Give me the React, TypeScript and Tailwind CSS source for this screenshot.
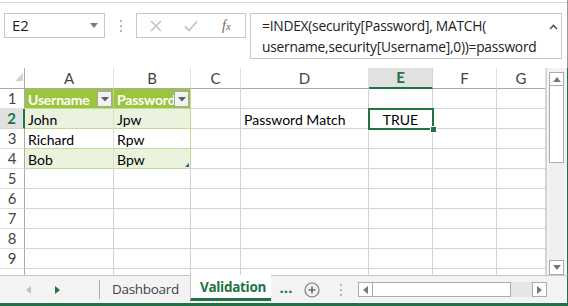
import React from "react";

function Tri({ dir, color, className }: { dir: "up" | "down" | "left" | "right"; color: string; className?: string }) {
  const pts: Record<string, string> = {
    up: "0,5 4,0 8,5",
    down: "0,0 8,0 4,5",
    left: "5,0 5,8 0,4",
    right: "0,0 0,8 5,4",
  };
  const w = dir === "up" || dir === "down" ? 8 : 5;
  const h = dir === "up" || dir === "down" ? 5 : 8;
  return (
    <svg width={w} height={h} viewBox={`0 0 ${w} ${h}`} className={className}>
      <polygon points={pts[dir]} fill={color} />
    </svg>
  );
}

function FilterBtn() {
  return (
    <div className="absolute right-[1px] top-[2px] w-[15px] h-[16px] border border-[#a6a6a6] bg-[#f2f2f2] flex items-center justify-center">
      <svg width="8" height="5" viewBox="0 0 8 5">
        <polygon points="0,0 8,0 4,4.5" fill="#5f5f5f" />
      </svg>
    </div>
  );
}

type CellDef = {
  text?: string;
  kind?: "th" | "td1" | "td2";
  align?: "left" | "center";
  selected?: boolean;
  filter?: boolean;
  colB?: boolean;
  handle?: boolean;
};

export default function App() {
  const cols = ["A", "B", "C", "D", "E", "F", "G"];
  const rows: Record<number, Record<string, CellDef>> = {
    1: { A: { text: "Username", kind: "th", filter: true }, B: { text: "Password", kind: "th", filter: true, colB: true } },
    2: {
      A: { text: "John", kind: "td1" },
      B: { text: "Jpw", kind: "td1", colB: true },
      D: { text: "Password Match" },
      E: { text: "TRUE", align: "center", selected: true },
    },
    3: { A: { text: "Richard", kind: "td2" }, B: { text: "Rpw", kind: "td2", colB: true } },
    4: { A: { text: "Bob", kind: "td1" }, B: { text: "Bpw", kind: "td1", colB: true, handle: true } },
  };

  const cellClass = (d: CellDef | undefined) => {
    const base = "relative flex items-center text-[14px] text-black border-b border-r whitespace-nowrap";
    if (!d || !d.kind) return `${base} border-[#d4d4d4]`;
    if (d.kind === "th") {
      return `${base} bg-[#9bc53d] text-white font-bold tracking-[-0.2px] border-b-[#c2dc96] ${d.colB ? "border-r-[#c2dc96]" : "border-r-[#b8d77e]"}`;
    }
    if (d.kind === "td1") {
      return `${base} bg-[#ebf3df] border-b-[#c2dc96] ${d.colB ? "border-r-[#c2dc96]" : "border-r-[#d9e3cc]"}`;
    }
    return `${base} bg-white border-b-[#c2dc96] ${d.colB ? "border-r-[#c2dc96]" : "border-r-[#d9e3cc]"}`;
  };

  return (
    <div className="w-[568px] h-[306px] bg-white overflow-hidden flex flex-col font-['Lato',sans-serif] text-black">
      {/* formula bar area */}
      <div className="h-[68px] shrink-0 flex flex-col border-r border-r-[#9a9a9a]">
        <div className="mt-[2px] h-px bg-[#d6d6d6]" />
        <div className="flex items-start pt-[10px] pl-[4px]">
          <div className="w-[101px] h-[25px] border border-[#c6c6c6] flex items-center justify-between pl-[7px] pr-[6px]">
            <span className="text-[15px] text-[#222] font-['Open_Sans',sans-serif]">E2</span>
            <Tri dir="down" color="#7a7a7a" />
          </div>
          <div className="w-[31px] h-[25px] flex flex-col items-center justify-center gap-[3px]">
            <div className="w-[2px] h-[2px] bg-[#b4b4b4]" />
            <div className="w-[2px] h-[2px] bg-[#b4b4b4]" />
            <div className="w-[2px] h-[2px] bg-[#b4b4b4]" />
          </div>
          <div className="w-[110px] h-[25px] border border-[#c6c6c6] flex items-center">
            <svg width="12" height="12" viewBox="0 0 12 12" className="ml-[13px]">
              <path d="M1 1 L11 11 M11 1 L1 11" stroke="#c4c4c4" strokeWidth="1.6" />
            </svg>
            <svg width="14" height="12" viewBox="0 0 14 12" className="ml-[22px]">
              <path d="M1 6.5 L5 10.5 L13 1.5" stroke="#c4c4c4" strokeWidth="1.8" fill="none" />
            </svg>
            <span className="ml-[24px] text-[14px] italic text-[#6a6a6a] font-['Liberation_Serif',serif] leading-none">
              f<span className="text-[11px]">x</span>
            </span>
          </div>
          <div className="ml-[4px] w-[312px] h-[46px] border border-[#c6c6c6] flex justify-between">
            <div className="pl-[11px] pt-[1px] text-[13.8px] leading-[21px] text-[#222] font-['Open_Sans',sans-serif] tracking-[-0.25px]">
              <div>=INDEX(security[Password], MATCH(</div>
              <div>username,security[Username],0))=password</div>
            </div>
            <svg width="9" height="6" viewBox="0 0 9 6" className="mt-[10px] mr-[3px]">
              <path d="M1 5 L4.5 1.5 L8 5" stroke="#555" strokeWidth="1.6" fill="none" />
            </svg>
          </div>
        </div>
      </div>

      {/* sheet area */}
      <div className="flex h-[207px] shrink-0 border-r border-r-[#217346]">
        <div className="grid grid-cols-[25px_89px_77px_50px_128px_64px_64px_49px] grid-rows-[21px_repeat(9,20px)_6px] w-[546px]">
          <div className="relative border-r border-b border-r-[#ababab] border-b-[#ababab] bg-white">
            <svg width="8" height="8" viewBox="0 0 8 8" className="absolute left-[15px] top-[5px]">
              <polygon points="8,0 8,8 0,8" fill="#d2d2d2" />
            </svg>
          </div>
          {cols.map((c) =>
            c === "E" ? (
              <div
                key={c}
                className="flex items-center justify-center border-b-2 border-b-[#217346] border-r border-r-[#d4d4d4] bg-[#e1e1e1] text-[15px] font-bold text-[#217346]"
              >
                {c}
              </div>
            ) : (
              <div
                key={c}
                className="flex items-center justify-center border-b border-b-[#ababab] border-r border-r-[#e1e1e1] bg-white text-[15px] text-[#444]"
              >
                {c}
              </div>
            )
          )}
          {[1, 2, 3, 4, 5, 6, 7, 8, 9].map((r) => (
            <React.Fragment key={r}>
              {r === 2 ? (
                <div className="flex items-center justify-center bg-[#e1e1e1] border-b border-b-[#d4d4d4] border-r-2 border-r-[#217346] text-[15px] font-bold text-[#217346]">
                  {r}
                </div>
              ) : (
                <div className="flex items-center justify-center bg-white border-b border-b-[#e1e1e1] border-r border-r-[#ababab] text-[15px] text-[#444]">
                  {r}
                </div>
              )}
              {cols.map((c) => {
                const d = rows[r]?.[c];
                return (
                  <div key={c} className={`${cellClass(d)} ${d?.selected ? "z-10" : ""}`}>
                    {d?.text && (
                      <span className={`${d.align === "center" ? "w-full text-center" : "pl-[3px]"} leading-none pt-[2px]`}>{d.text}</span>
                    )}
                    {d?.filter && <FilterBtn />}
                    {d?.selected && (
                      <div className="absolute -left-[1px] -top-[1px] w-[66px] h-[22px] border-2 border-[#217346]">
                        <div className="absolute -right-[5px] -bottom-[5px] w-[7px] h-[7px] bg-[#217346] border border-white" />
                      </div>
                    )}
                    {d?.handle && (
                      <svg width="4" height="4" viewBox="0 0 4 4" className="absolute right-[1px] bottom-[1px]">
                        <polygon points="4,0 4,4 0,4" fill="#3b4ea8" />
                      </svg>
                    )}
                  </div>
                );
              })}
            </React.Fragment>
          ))}
          <div className="border-r border-r-[#ababab]" />
          {cols.map((c) => (
            <div key={c} className="border-r border-r-[#d4d4d4]" />
          ))}
        </div>
        {/* vertical scrollbar panel */}
        <div className="flex-1 bg-[#f3f3f3] border-l border-l-[#d4d4d4] pl-[2px] pt-[4px]">
          <div className="w-[15px] h-[203px] flex flex-col">
            <div className="h-[14px] border border-[#ababab] bg-white flex items-center justify-center">
              <Tri dir="up" color="#777" />
            </div>
            <div className="h-[77px] border border-[#ababab] border-t-0 bg-white" />
            <div className="flex-1 bg-[#f0f0f0]" />
            <div className="h-[15px] border border-[#ababab] bg-white flex items-center justify-center">
              <Tri dir="down" color="#777" />
            </div>
          </div>
        </div>
      </div>

      {/* tab bar */}
      <div className="h-[28px] shrink-0 bg-[#f3f3f3] border-t border-t-[#c6c6c6] flex items-stretch border-r border-r-[#217346] relative">
        <div className="w-[100px] flex items-center border-r border-r-[#ababab] my-[4px]">
          <Tri dir="left" color="#c0c0c0" className="ml-[26px]" />
          <Tri dir="right" color="#217346" className="ml-[24px]" />
        </div>
        <div className="w-[90px] flex items-center pl-[12px] text-[13.5px] text-[#444] font-['Open_Sans',sans-serif] tracking-[-0.3px]">
          Dashboard
        </div>
        <div className="-mt-px w-[81px] bg-white border-l border-l-[#c6c6c6] flex items-center justify-center border-b-[3px] border-b-[#217346] mb-[2px]">
          <span className="text-[13.5px] font-bold text-[#217346] font-['Open_Sans',sans-serif] tracking-[-0.3px] pt-[1px] pl-[4px]">Validation</span>
        </div>
        <div className="w-[30px] flex items-center justify-center text-[15px] font-bold text-[#217346] font-['Open_Sans',sans-serif] pb-[4px]">
          ...
        </div>
        <div className="w-[22px] flex items-center justify-center">
          <svg width="16" height="16" viewBox="0 0 16 16">
            <circle cx="8" cy="8" r="7" stroke="#7a7a7a" strokeWidth="1.2" fill="none" />
            <path d="M8 4.5 V11.5 M4.5 8 H11.5" stroke="#6a6a6a" strokeWidth="1.6" />
          </svg>
        </div>
        <div className="w-[35px] flex flex-col items-center justify-center gap-[3px]">
          <div className="w-[2px] h-[2px] bg-[#b4b4b4]" />
          <div className="w-[2px] h-[2px] bg-[#b4b4b4]" />
          <div className="w-[2px] h-[2px] bg-[#b4b4b4]" />
        </div>
        <div className="w-[189px] flex items-center">
          <div className="w-full h-[15px] flex">
            <div className="w-[15px] border border-[#ababab] bg-white flex items-center justify-center">
              <Tri dir="left" color="#777" />
            </div>
            <div className="w-[138px] border-y border-r border-[#ababab] bg-white" />
            <div className="flex-1 bg-[#e6e6e6]" />
            <div className="w-[15px] border border-[#ababab] bg-white flex items-center justify-center">
              <Tri dir="right" color="#777" />
            </div>
          </div>
        </div>
      </div>
      <div className="h-[3px] shrink-0 bg-[#217346]" />
    </div>
  );
}
